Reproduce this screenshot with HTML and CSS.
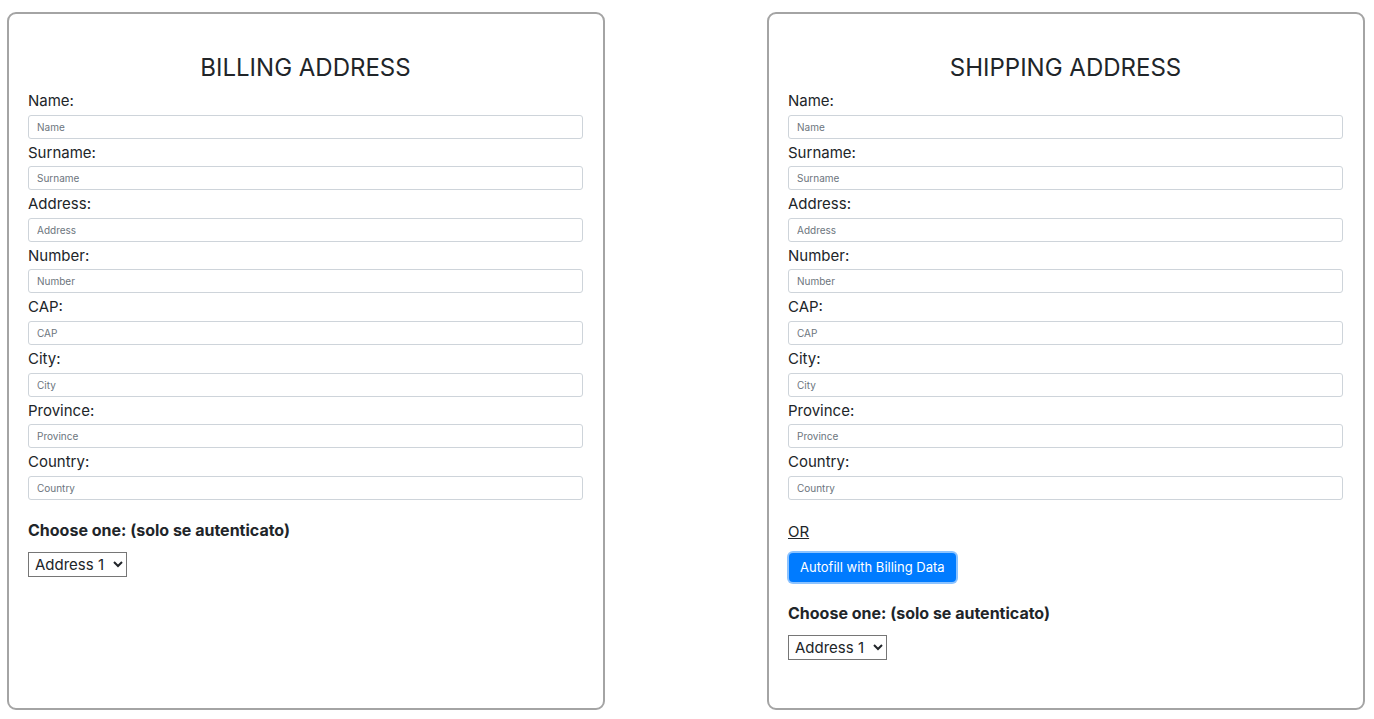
FILE: index.html
```html
<!DOCTYPE html>
<html lang="it">
<head>
<meta charset="utf-8">
<title>Addresses</title>
<link rel="stylesheet" href="styles.css">
</head>
<body>
<div class="page">
  <form class="card">
    <h2 class="title">BILLING ADDRESS</h2>
    <label class="lbl">Name:</label>
    <input class="field" type="text" placeholder="Name">
    <label class="lbl">Surname:</label>
    <input class="field" type="text" placeholder="Surname">
    <label class="lbl">Address:</label>
    <input class="field" type="text" placeholder="Address">
    <label class="lbl">Number:</label>
    <input class="field" type="text" placeholder="Number">
    <label class="lbl">CAP:</label>
    <input class="field" type="text" placeholder="CAP">
    <label class="lbl">City:</label>
    <input class="field" type="text" placeholder="City">
    <label class="lbl">Province:</label>
    <input class="field" type="text" placeholder="Province">
    <label class="lbl">Country:</label>
    <input class="field" type="text" placeholder="Country">
    <p class="choose">Choose one: (solo se autenticato)</p>
    <select class="pick"><option>Address 1</option><option>Address 2</option></select>
  </form>
  <form class="card">
    <h2 class="title">SHIPPING ADDRESS</h2>
    <label class="lbl">Name:</label>
    <input class="field" type="text" placeholder="Name">
    <label class="lbl">Surname:</label>
    <input class="field" type="text" placeholder="Surname">
    <label class="lbl">Address:</label>
    <input class="field" type="text" placeholder="Address">
    <label class="lbl">Number:</label>
    <input class="field" type="text" placeholder="Number">
    <label class="lbl">CAP:</label>
    <input class="field" type="text" placeholder="CAP">
    <label class="lbl">City:</label>
    <input class="field" type="text" placeholder="City">
    <label class="lbl">Province:</label>
    <input class="field" type="text" placeholder="Province">
    <label class="lbl">Country:</label>
    <input class="field" type="text" placeholder="Country">
    <a class="or" href="#">OR</a>
    <button class="btn" type="button">Autofill with Billing Data</button>
    <p class="choose">Choose one: (solo se autenticato)</p>
    <select class="pick"><option>Address 1</option><option>Address 2</option></select>
  </form>
</div>
</body>
</html>
```

FILE: styles.css
```css
html, body {
  margin: 0;
  padding: 0;
  background: #fff;
}
body {
  font-family: Inter, "Open Sans", sans-serif;
  color: #212529;
}
.page {
  display: flex;
  justify-content: space-between;
  align-items: flex-start;
  padding: 12px 9px 0 7px;
}
.card {
  box-sizing: border-box;
  width: 598px;
  height: 698px;
  border: 2px solid #a4a4a4;
  border-radius: 9px;
  padding: 39px 20px 0 19px;
  display: flex;
  flex-direction: column;
  align-items: flex-start;
}
.title {
  align-self: stretch;
  text-align: center;
  font-size: 24px;
  font-weight: 400;
  line-height: 29px;
  margin: 0 0 5px 0;
}
.lbl {
  display: block;
  font-size: 15px;
  line-height: 27.6px;
}
.field {
  box-sizing: border-box;
  align-self: stretch;
  height: 24px;
  margin: 0;
  padding: 0 8px;
  border: 1px solid #ced4da;
  border-radius: 3px;
  font-family: inherit;
  font-size: 10px;
  color: #495057;
}
.field::placeholder {
  color: #6c757d;
}
.choose {
  font-size: 16px;
  font-weight: 700;
  margin: 18px 0 10px 0;
  line-height: 24px;
}
.pick {
  font-family: inherit;
  font-size: 15px;
  height: 25px;
  color: #212529;
  background: #fff;
  border: 1px solid #767676;
  border-radius: 0;
  padding: 0 2px;
}
.or {
  font-size: 15px;
  color: #212529;
  text-decoration: underline;
  margin-top: 21px;
  line-height: 22px;
}
.btn {
  margin: 10px 0 0 1px;
  height: 29px;
  padding: 0 11px;
  border: none;
  border-radius: 4px;
  background: #007bff;
  color: #fff;
  font-family: inherit;
  font-size: 13px;
  box-shadow: 0 0 0 2px rgba(0, 123, 255, 0.45);
}
.btn + .choose {
  margin-top: 19px;
}
```
